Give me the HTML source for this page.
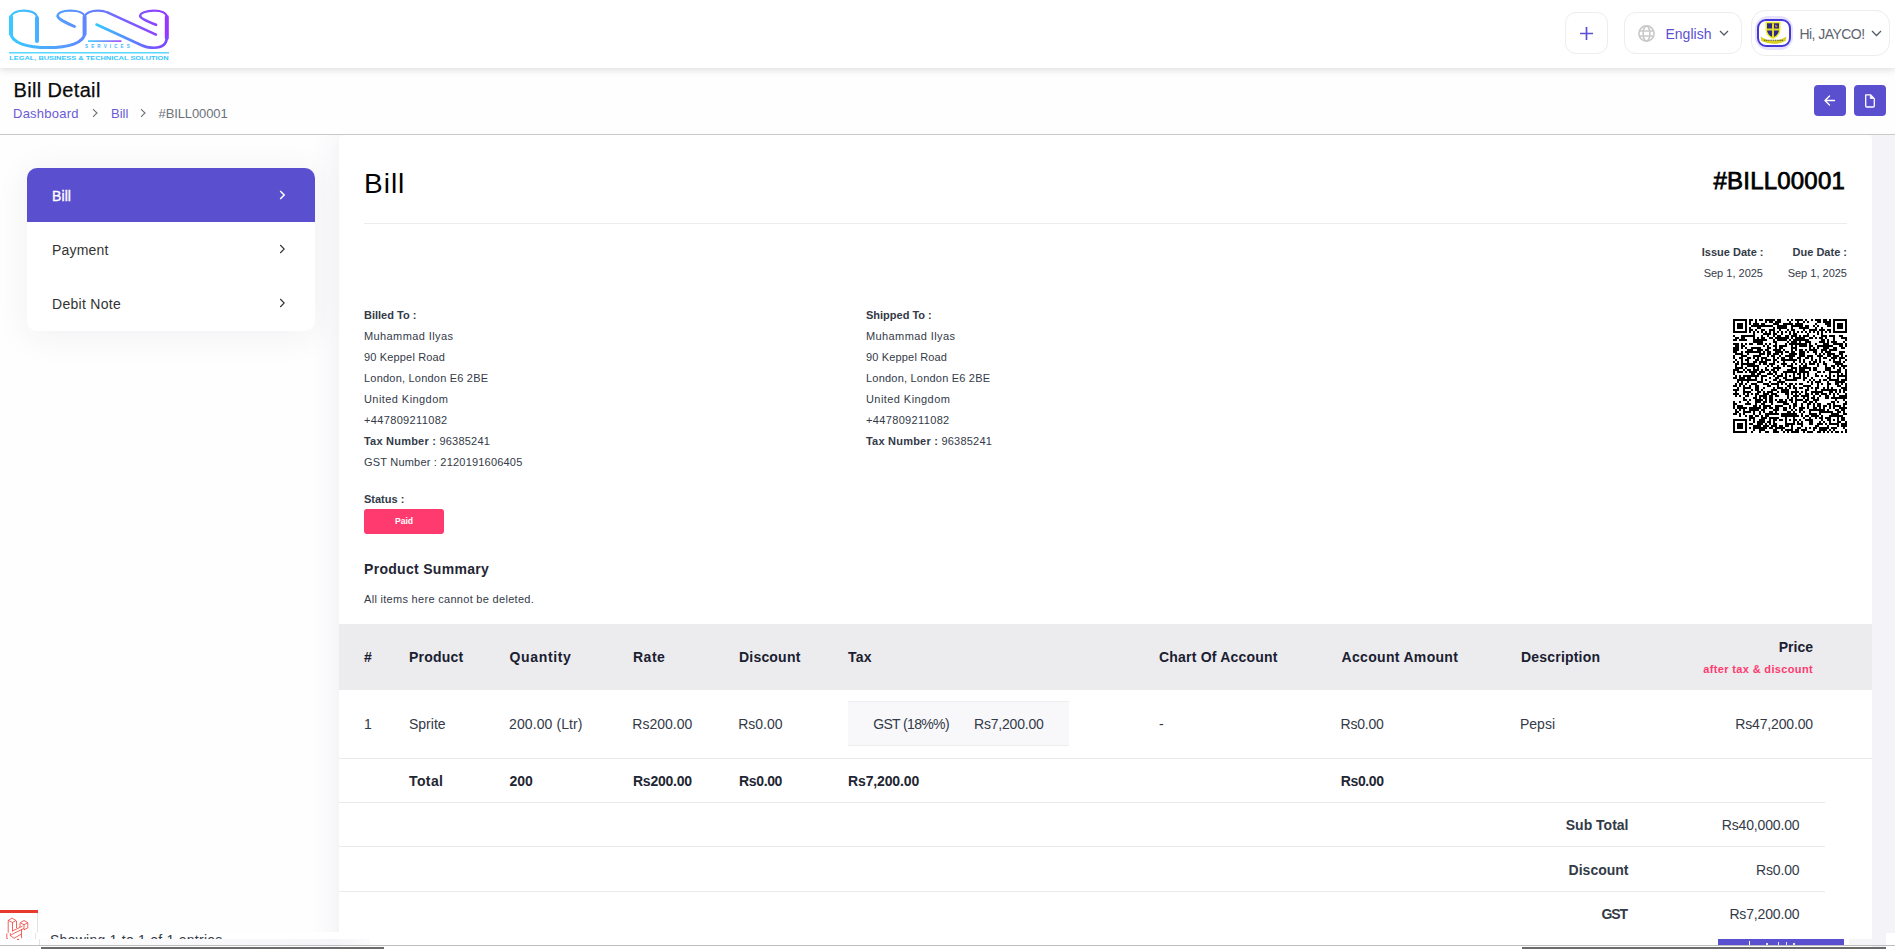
<!DOCTYPE html>
<html><head><meta charset="utf-8"><title>Bill Detail</title>
<style>
*{box-sizing:border-box;margin:0;padding:0}
html,body{width:1895px;height:949px;overflow:hidden;background:#fefefe;font-family:"Liberation Sans",sans-serif}
.t{position:absolute;line-height:1;white-space:nowrap}
.abs{position:absolute}
</style></head><body>
<div class="abs" style="left:0;top:0;width:1895px;height:949px;overflow:hidden">
<!-- main card -->
<div class="abs" style="left:339px;top:135px;width:1533px;height:900px;background:#fff;border-radius:5px 5px 0 0;box-shadow:0 0 32px rgba(50,50,130,0.09)"></div>
<div class="abs" style="left:1872px;top:135px;width:23px;height:814px;background:#f4f4f8"></div>
<!-- page subheader bg -->
<div class="abs" style="left:0;top:68px;width:1895px;height:67px;background:#fefefe;border-bottom:1px solid #c9c9c9"></div>
<!-- header -->
<div class="abs" style="left:0;top:0;width:1895px;height:68px;background:#fff;box-shadow:0 2px 7px rgba(0,0,0,0.13)"></div>
<svg style="position:absolute;left:0;top:0" width="180" height="68" viewBox="0 0 180 68">
<defs>
<linearGradient id="g1" x1="0" y1="0" x2="180" y2="0" gradientUnits="userSpaceOnUse">
<stop offset="0" stop-color="#33d2ff"/><stop offset="0.45" stop-color="#5d8cff"/><stop offset="1" stop-color="#9b2cff"/></linearGradient>
<linearGradient id="g2" x1="95" y1="0" x2="160" y2="0" gradientUnits="userSpaceOnUse">
<stop offset="0" stop-color="#33ccff"/><stop offset="1" stop-color="#7a4bff"/></linearGradient>
<linearGradient id="g3" x1="88" y1="0" x2="122" y2="0" gradientUnits="userSpaceOnUse">
<stop offset="0" stop-color="#33ccff"/><stop offset="1" stop-color="#a040ff"/></linearGradient>
</defs>
<g fill="none" stroke="url(#g1)" stroke-linecap="round">
<path stroke-width="4" d="M37 41V18M11 17V34M84.6 34V17M166.8 38V17"/>
<path stroke-width="2.1" d="M37 18C37 12.5 30 10.6 24 10.6S11 12.5 11 17.5"/>
<path stroke-width="3" d="M11 33C11 43 28 47.6 48 47.6S84.6 43 84.6 33"/>
<path stroke-width="2.1" d="M84.6 17.5C84.6 12.5 78 10.6 70 10.6C62 10.6 57.6 13 57.6 16"/><path stroke-width="2.9" d="M57.8 16.2C58 18.5 62 21 74.5 26.5"/>
<path stroke-width="2.1" d="M84.6 17.5C84.6 12.5 92 10.6 98 10.6C102 10.6 105 11.2 108 12.6"/>
<path stroke-width="2.5" d="M108 12.6L156 34.6"/>
<path stroke-width="2.1" d="M166.8 17.5C166.8 12.5 161 10.6 154 10.6C146 10.6 140 13 140 16"/><path stroke-width="2.7" d="M140.2 16.2C140.5 18.5 146 21 156 24.8"/>
</g>
<path d="M96.5 24.5L141 45C145 47 149.5 47.7 154 47.7C161 47.7 166.8 45 166.8 37" fill="none" stroke="url(#g2)" stroke-width="2.6" stroke-linecap="round"/>
<rect x="88" y="40.3" width="33.5" height="1.6" fill="url(#g3)"/>
<text x="85" y="47.8" font-family="Liberation Sans" font-weight="700" font-size="4.6" letter-spacing="3.1" fill="#3fb8ff">SERVICES</text>
<rect x="9" y="52" width="160" height="1.5" fill="#5ad8ff"/>
<text x="9.2" y="59.6" font-family="Liberation Sans" font-weight="700" font-size="5.6" textLength="159.5" lengthAdjust="spacingAndGlyphs" fill="#33c6ff">LEGAL, BUSINESS &amp; TECHNICAL SOLUTION</text>
</svg>
<div class="abs" style="left:1565px;top:12px;width:43px;height:42px;border:1px solid #ededf0;border-radius:11px;background:#fff"></div>
<svg class="abs" style="left:1579px;top:26px" width="15" height="15" viewBox="0 0 15 15"><path d="M7.5 1V14M1 7.5H14" stroke="#5b4fd3" stroke-width="1.7"/></svg>
<div class="abs" style="left:1624px;top:12px;width:118px;height:42px;border:1px solid #ededf0;border-radius:12px;background:#fff"></div>
<svg class="abs" style="left:1637px;top:24px" width="19" height="19" viewBox="0 0 19 19"><g fill="none" stroke="#c9c9cc" stroke-width="1.6"><circle cx="9.5" cy="9.5" r="7.6"/><ellipse cx="9.5" cy="9.5" rx="3.4" ry="7.6"/><path d="M2 7H17M2 12H17"/></g></svg>
<svg class="abs" style="left:1719px;top:30px" width="10" height="7" viewBox="0 0 10 7"><path d="M1 1L5 5L9 1" fill="none" stroke="#555b66" stroke-width="1.3"/></svg>
<div class="abs" style="left:1751px;top:10px;width:139px;height:46px;border:1px solid #ededf0;border-radius:14px;background:#fff"></div>
<div class="abs" style="left:1755px;top:16px;width:38px;height:34px;border-radius:13px;background:#e6e2fb"></div>
<div class="abs" style="left:1757px;top:19px;width:34px;height:28px;border:2.5px solid #4638d8;border-radius:9px;background:#fff;overflow:hidden">
<svg width="29" height="23" viewBox="0 0 29 23" style="position:absolute;left:0;top:0">
<path d="M6.5 0.8H21.5V8.5C21.5 13.5 17.5 16.8 14 18C10.5 16.8 6.5 13.5 6.5 8.5Z" fill="#f0ea2a"/>
<path d="M8 2.3H20V8.5C20 12.5 17 15.3 14 16.3C11 15.3 8 12.5 8 8.5Z" fill="#2b2a86"/>
<path d="M13 2.3H15V16.3H13ZM8 7.6H20V9.6H8Z" fill="#e6db2c"/>
<path d="M16 3.5L19 5.5L16.5 6.5Z" fill="#e0833a"/>
<path d="M1.5 15.5Q14 24 27.5 15.5L26.5 20Q14 25.5 2.5 20Z" fill="#d8cf22"/>
<path d="M5 19.2H24" stroke="#5a5020" stroke-width="1.1" stroke-dasharray="1.2 0.6"/>
</svg></div>
<svg class="abs" style="left:1871px;top:30px" width="11" height="7" viewBox="0 0 11 7"><path d="M1 1L5.5 5.5L10 1" fill="none" stroke="#555b66" stroke-width="1.3"/></svg>
<svg class="abs" style="left:91px;top:108px" width="8" height="10" viewBox="0 0 8 10"><path d="M2 1.2L6 5L2 8.8" fill="none" stroke="#6c727c" stroke-width="1.1"/></svg>
<svg class="abs" style="left:139px;top:108px" width="8" height="10" viewBox="0 0 8 10"><path d="M2 1.2L6 5L2 8.8" fill="none" stroke="#6c727c" stroke-width="1.1"/></svg>
<!-- action buttons -->
<div class="abs" style="left:1814px;top:85px;width:32px;height:31px;background:#5a4fcf;border-radius:4px"></div>
<svg class="abs" style="left:1814px;top:85px" width="32" height="31" viewBox="0 0 32 31"><path d="M20.5 15.5H11.2M15.5 11L11 15.5L15.5 20" fill="none" stroke="#fff" stroke-width="1.4" stroke-linecap="round" stroke-linejoin="round"/></svg>
<div class="abs" style="left:1854px;top:85px;width:32px;height:31px;background:#5a4fcf;border-radius:4px"></div>
<svg class="abs" style="left:1854px;top:85px" width="32" height="31" viewBox="0 0 32 31"><path d="M11.7 9.8H16.5L20.3 13.6V21C20.3 21.6 19.9 22 19.3 22H12.7C12.1 22 11.7 21.6 11.7 21Z" fill="none" stroke="#fff" stroke-width="1.3" stroke-linejoin="round"/><path d="M16.3 10.2V13.5H19.8" fill="#fff" stroke="#fff" stroke-width="0.8"/></svg>
<!-- nav card -->
<div class="abs" style="left:27px;top:168px;width:288px;height:163px;background:#fff;border-radius:10px;box-shadow:0 4px 36px rgba(40,40,90,0.065);overflow:hidden">
<div class="abs" style="left:0;top:0;width:288px;height:54px;background:#5a4fcf"></div>
</div>
<svg class="abs" style="left:277px;top:189px" width="10" height="12" viewBox="0 0 10 12"><path d="M3.2 2L7.2 6L3.2 10" fill="none" stroke="#fff" stroke-width="1.5"/></svg>
<svg class="abs" style="left:277px;top:243px" width="10" height="12" viewBox="0 0 10 12"><path d="M3.2 2L7.2 6L3.2 10" fill="none" stroke="#333" stroke-width="1.1"/></svg>
<svg class="abs" style="left:277px;top:297px" width="10" height="12" viewBox="0 0 10 12"><path d="M3.2 2L7.2 6L3.2 10" fill="none" stroke="#333" stroke-width="1.1"/></svg>
<!-- content -->
<div class="abs" style="left:364px;top:223px;width:1483px;height:1px;background:#ececef"></div>
<svg class="abs" style="left:1733px;top:319px" width="114" height="114" viewBox="0 0 114 114" shape-rendering="crispEdges"><path d="M0 0h14v2h-14zM16 0h4v2h-4zM22 0h2v2h-2zM26 0h4v2h-4zM32 0h10v2h-10zM44 0h4v2h-4zM54 0h2v2h-2zM58 0h2v2h-2zM62 0h8v2h-8zM72 0h2v2h-2zM78 0h2v2h-2zM82 0h6v2h-6zM90 0h4v2h-4zM96 0h2v2h-2zM100 0h14v2h-14zM0 2h2v2h-2zM12 2h2v2h-2zM16 2h2v2h-2zM22 2h2v2h-2zM32 2h2v2h-2zM36 2h4v2h-4zM42 2h6v2h-6zM56 2h2v2h-2zM64 2h2v2h-2zM70 2h2v2h-2zM74 2h2v2h-2zM84 2h4v2h-4zM90 2h8v2h-8zM100 2h2v2h-2zM112 2h2v2h-2zM0 4h2v2h-2zM4 4h6v2h-6zM12 4h2v2h-2zM16 4h2v2h-2zM20 4h6v2h-6zM28 4h4v2h-4zM40 4h6v2h-6zM50 4h10v2h-10zM62 4h8v2h-8zM82 4h2v2h-2zM92 4h6v2h-6zM100 4h2v2h-2zM104 4h6v2h-6zM112 4h2v2h-2zM0 6h2v2h-2zM4 6h6v2h-6zM12 6h2v2h-2zM18 6h22v2h-22zM44 6h10v2h-10zM58 6h12v2h-12zM72 6h4v2h-4zM80 6h2v2h-2zM84 6h2v2h-2zM94 6h4v2h-4zM100 6h2v2h-2zM104 6h6v2h-6zM112 6h2v2h-2zM0 8h2v2h-2zM4 8h6v2h-6zM12 8h2v2h-2zM16 8h2v2h-2zM24 8h4v2h-4zM40 8h2v2h-2zM44 8h10v2h-10zM58 8h2v2h-2zM66 8h10v2h-10zM82 8h2v2h-2zM88 8h2v2h-2zM100 8h2v2h-2zM104 8h6v2h-6zM112 8h2v2h-2zM0 10h2v2h-2zM12 10h2v2h-2zM16 10h4v2h-4zM22 10h2v2h-2zM28 10h4v2h-4zM36 10h6v2h-6zM46 10h2v2h-2zM54 10h2v2h-2zM58 10h4v2h-4zM70 10h2v2h-2zM76 10h8v2h-8zM86 10h6v2h-6zM94 10h4v2h-4zM100 10h2v2h-2zM112 10h2v2h-2zM0 12h14v2h-14zM16 12h2v2h-2zM20 12h2v2h-2zM24 12h2v2h-2zM28 12h2v2h-2zM32 12h2v2h-2zM36 12h2v2h-2zM40 12h2v2h-2zM44 12h2v2h-2zM48 12h2v2h-2zM52 12h2v2h-2zM56 12h2v2h-2zM60 12h2v2h-2zM64 12h2v2h-2zM68 12h2v2h-2zM72 12h2v2h-2zM76 12h2v2h-2zM80 12h2v2h-2zM84 12h2v2h-2zM88 12h2v2h-2zM92 12h2v2h-2zM96 12h2v2h-2zM100 12h14v2h-14zM20 14h2v2h-2zM30 14h8v2h-8zM40 14h4v2h-4zM48 14h2v2h-2zM56 14h2v2h-2zM60 14h4v2h-4zM74 14h2v2h-2zM84 14h2v2h-2zM88 14h2v2h-2zM0 16h2v2h-2zM8 16h14v2h-14zM28 16h2v2h-2zM34 16h2v2h-2zM40 16h2v2h-2zM44 16h4v2h-4zM52 16h4v2h-4zM58 16h6v2h-6zM66 16h2v2h-2zM70 16h6v2h-6zM80 16h2v2h-2zM88 16h6v2h-6zM96 16h6v2h-6zM106 16h4v2h-4zM2 18h4v2h-4zM8 18h4v2h-4zM20 18h2v2h-2zM24 18h2v2h-2zM28 18h4v2h-4zM36 18h4v2h-4zM42 18h14v2h-14zM58 18h2v2h-2zM62 18h10v2h-10zM76 18h4v2h-4zM82 18h2v2h-2zM86 18h4v2h-4zM92 18h2v2h-2zM100 18h2v2h-2zM108 18h6v2h-6zM0 20h4v2h-4zM6 20h8v2h-8zM20 20h14v2h-14zM40 20h2v2h-2zM44 20h10v2h-10zM56 20h2v2h-2zM60 20h16v2h-16zM88 20h4v2h-4zM94 20h2v2h-2zM100 20h2v2h-2zM112 20h2v2h-2zM20 22h10v2h-10zM40 22h4v2h-4zM54 22h2v2h-2zM58 22h6v2h-6zM66 22h2v2h-2zM72 22h6v2h-6zM86 22h6v2h-6zM94 22h2v2h-2zM98 22h6v2h-6zM110 22h2v2h-2zM0 24h6v2h-6zM8 24h2v2h-2zM12 24h2v2h-2zM16 24h4v2h-4zM24 24h6v2h-6zM32 24h2v2h-2zM36 24h2v2h-2zM42 24h2v2h-2zM52 24h2v2h-2zM56 24h18v2h-18zM76 24h2v2h-2zM82 24h2v2h-2zM90 24h6v2h-6zM100 24h10v2h-10zM112 24h2v2h-2zM2 26h4v2h-4zM8 26h4v2h-4zM30 26h2v2h-2zM34 26h2v2h-2zM40 26h4v2h-4zM46 26h8v2h-8zM58 26h2v2h-2zM62 26h2v2h-2zM66 26h8v2h-8zM76 26h4v2h-4zM84 26h16v2h-16zM106 26h4v2h-4zM112 26h2v2h-2zM0 28h6v2h-6zM8 28h2v2h-2zM12 28h2v2h-2zM18 28h10v2h-10zM34 28h4v2h-4zM42 28h2v2h-2zM46 28h4v2h-4zM58 28h6v2h-6zM76 28h2v2h-2zM80 28h2v2h-2zM84 28h2v2h-2zM90 28h6v2h-6zM100 28h4v2h-4zM108 28h4v2h-4zM0 30h6v2h-6zM14 30h6v2h-6zM24 30h6v2h-6zM32 30h4v2h-4zM40 30h8v2h-8zM50 30h2v2h-2zM58 30h2v2h-2zM62 30h2v2h-2zM66 30h4v2h-4zM72 30h2v2h-2zM76 30h8v2h-8zM88 30h6v2h-6zM96 30h8v2h-8zM0 32h4v2h-4zM8 32h2v2h-2zM12 32h16v2h-16zM30 32h2v2h-2zM34 32h4v2h-4zM42 32h8v2h-8zM52 32h4v2h-4zM58 32h4v2h-4zM66 32h6v2h-6zM74 32h2v2h-2zM80 32h4v2h-4zM88 32h2v2h-2zM92 32h6v2h-6zM106 32h6v2h-6zM2 34h8v2h-8zM14 34h2v2h-2zM26 34h6v2h-6zM34 34h4v2h-4zM40 34h6v2h-6zM48 34h2v2h-2zM56 34h8v2h-8zM66 34h6v2h-6zM82 34h2v2h-2zM86 34h2v2h-2zM90 34h2v2h-2zM94 34h8v2h-8zM106 34h4v2h-4zM0 36h2v2h-2zM8 36h6v2h-6zM20 36h8v2h-8zM34 36h2v2h-2zM38 36h4v2h-4zM46 36h2v2h-2zM52 36h10v2h-10zM66 36h6v2h-6zM74 36h6v2h-6zM84 36h6v2h-6zM94 36h4v2h-4zM100 36h6v2h-6zM108 36h2v2h-2zM112 36h2v2h-2zM0 38h2v2h-2zM6 38h4v2h-4zM14 38h4v2h-4zM20 38h2v2h-2zM24 38h2v2h-2zM28 38h6v2h-6zM40 38h2v2h-2zM44 38h2v2h-2zM48 38h4v2h-4zM56 38h4v2h-4zM64 38h4v2h-4zM72 38h4v2h-4zM78 38h2v2h-2zM86 38h2v2h-2zM90 38h4v2h-4zM98 38h6v2h-6zM106 38h6v2h-6zM2 40h2v2h-2zM8 40h2v2h-2zM12 40h4v2h-4zM22 40h4v2h-4zM28 40h2v2h-2zM32 40h6v2h-6zM40 40h4v2h-4zM48 40h16v2h-16zM66 40h2v2h-2zM70 40h2v2h-2zM78 40h2v2h-2zM82 40h2v2h-2zM86 40h2v2h-2zM96 40h2v2h-2zM100 40h2v2h-2zM106 40h2v2h-2zM112 40h2v2h-2zM0 42h2v2h-2zM4 42h2v2h-2zM8 42h2v2h-2zM14 42h2v2h-2zM20 42h4v2h-4zM26 42h8v2h-8zM40 42h2v2h-2zM44 42h2v2h-2zM50 42h2v2h-2zM60 42h2v2h-2zM66 42h2v2h-2zM70 42h2v2h-2zM76 42h2v2h-2zM80 42h4v2h-4zM86 42h2v2h-2zM90 42h2v2h-2zM100 42h8v2h-8zM110 42h2v2h-2zM2 44h4v2h-4zM8 44h14v2h-14zM26 44h2v2h-2zM30 44h4v2h-4zM36 44h6v2h-6zM48 44h6v2h-6zM58 44h2v2h-2zM62 44h2v2h-2zM68 44h2v2h-2zM72 44h2v2h-2zM76 44h6v2h-6zM84 44h2v2h-2zM90 44h4v2h-4zM102 44h8v2h-8zM2 46h2v2h-2zM8 46h2v2h-2zM14 46h12v2h-12zM34 46h2v2h-2zM38 46h2v2h-2zM44 46h2v2h-2zM50 46h2v2h-2zM54 46h6v2h-6zM66 46h2v2h-2zM70 46h4v2h-4zM84 46h2v2h-2zM92 46h2v2h-2zM98 46h4v2h-4zM104 46h2v2h-2zM108 46h6v2h-6zM2 48h8v2h-8zM12 48h2v2h-2zM20 48h2v2h-2zM24 48h2v2h-2zM32 48h2v2h-2zM40 48h8v2h-8zM58 48h6v2h-6zM66 48h12v2h-12zM80 48h4v2h-4zM92 48h6v2h-6zM100 48h2v2h-2zM106 48h2v2h-2zM110 48h2v2h-2zM0 50h6v2h-6zM10 50h2v2h-2zM14 50h4v2h-4zM20 50h6v2h-6zM28 50h2v2h-2zM32 50h4v2h-4zM38 50h4v2h-4zM44 50h2v2h-2zM54 50h6v2h-6zM62 50h2v2h-2zM66 50h6v2h-6zM76 50h2v2h-2zM80 50h4v2h-4zM92 50h6v2h-6zM104 50h4v2h-4zM112 50h2v2h-2zM0 52h2v2h-2zM4 52h6v2h-6zM12 52h2v2h-2zM16 52h8v2h-8zM26 52h6v2h-6zM36 52h2v2h-2zM40 52h4v2h-4zM50 52h14v2h-14zM66 52h10v2h-10zM84 52h4v2h-4zM90 52h2v2h-2zM96 52h12v2h-12zM112 52h2v2h-2zM0 54h2v2h-2zM18 54h4v2h-4zM24 54h4v2h-4zM34 54h6v2h-6zM42 54h2v2h-2zM48 54h2v2h-2zM52 54h2v2h-2zM60 54h2v2h-2zM64 54h4v2h-4zM70 54h2v2h-2zM74 54h2v2h-2zM82 54h2v2h-2zM96 54h2v2h-2zM104 54h2v2h-2zM108 54h2v2h-2zM112 54h2v2h-2zM2 56h2v2h-2zM6 56h2v2h-2zM10 56h16v2h-16zM28 56h6v2h-6zM40 56h2v2h-2zM44 56h6v2h-6zM52 56h2v2h-2zM56 56h2v2h-2zM60 56h2v2h-2zM66 56h2v2h-2zM70 56h2v2h-2zM74 56h2v2h-2zM82 56h4v2h-4zM88 56h2v2h-2zM92 56h2v2h-2zM96 56h2v2h-2zM100 56h2v2h-2zM104 56h10v2h-10zM0 58h4v2h-4zM6 58h6v2h-6zM14 58h4v2h-4zM22 58h2v2h-2zM28 58h2v2h-2zM36 58h2v2h-2zM42 58h4v2h-4zM50 58h4v2h-4zM60 58h8v2h-8zM70 58h4v2h-4zM78 58h2v2h-2zM94 58h4v2h-4zM104 58h2v2h-2zM112 58h2v2h-2zM4 60h20v2h-20zM28 60h2v2h-2zM32 60h2v2h-2zM40 60h4v2h-4zM46 60h2v2h-2zM52 60h12v2h-12zM70 60h2v2h-2zM76 60h2v2h-2zM80 60h2v2h-2zM86 60h2v2h-2zM90 60h4v2h-4zM96 60h10v2h-10zM108 60h6v2h-6zM4 62h2v2h-2zM8 62h2v2h-2zM14 62h2v2h-2zM24 62h6v2h-6zM36 62h2v2h-2zM44 62h8v2h-8zM74 62h2v2h-2zM78 62h2v2h-2zM82 62h6v2h-6zM94 62h2v2h-2zM102 62h10v2h-10zM2 64h2v2h-2zM6 64h4v2h-4zM12 64h2v2h-2zM18 64h6v2h-6zM30 64h6v2h-6zM38 64h8v2h-8zM48 64h2v2h-2zM52 64h2v2h-2zM56 64h4v2h-4zM62 64h2v2h-2zM66 64h4v2h-4zM78 64h2v2h-2zM84 64h2v2h-2zM88 64h2v2h-2zM94 64h4v2h-4zM102 64h4v2h-4zM108 64h2v2h-2zM112 64h2v2h-2zM0 66h4v2h-4zM6 66h2v2h-2zM10 66h2v2h-2zM16 66h2v2h-2zM22 66h4v2h-4zM34 66h4v2h-4zM44 66h2v2h-2zM54 66h4v2h-4zM60 66h2v2h-2zM70 66h8v2h-8zM84 66h2v2h-2zM94 66h2v2h-2zM104 66h4v2h-4zM112 66h2v2h-2zM4 68h2v2h-2zM10 68h8v2h-8zM22 68h4v2h-4zM30 68h2v2h-2zM40 68h2v2h-2zM44 68h6v2h-6zM52 68h2v2h-2zM56 68h2v2h-2zM60 68h4v2h-4zM66 68h4v2h-4zM74 68h2v2h-2zM78 68h2v2h-2zM82 68h4v2h-4zM90 68h2v2h-2zM94 68h2v2h-2zM98 68h2v2h-2zM108 68h6v2h-6zM0 70h6v2h-6zM10 70h2v2h-2zM18 70h2v2h-2zM22 70h4v2h-4zM28 70h2v2h-2zM38 70h6v2h-6zM48 70h8v2h-8zM62 70h2v2h-2zM72 70h4v2h-4zM82 70h2v2h-2zM88 70h16v2h-16zM106 70h2v2h-2zM110 70h4v2h-4zM2 72h2v2h-2zM10 72h8v2h-8zM24 72h4v2h-4zM30 72h2v2h-2zM34 72h6v2h-6zM44 72h2v2h-2zM48 72h8v2h-8zM58 72h8v2h-8zM68 72h2v2h-2zM72 72h2v2h-2zM78 72h12v2h-12zM96 72h4v2h-4zM102 72h2v2h-2zM106 72h2v2h-2zM110 72h2v2h-2zM0 74h6v2h-6zM10 74h2v2h-2zM14 74h2v2h-2zM18 74h2v2h-2zM22 74h4v2h-4zM30 74h6v2h-6zM38 74h6v2h-6zM52 74h4v2h-4zM58 74h2v2h-2zM62 74h2v2h-2zM66 74h2v2h-2zM72 74h4v2h-4zM78 74h2v2h-2zM82 74h4v2h-4zM88 74h6v2h-6zM96 74h2v2h-2zM100 74h2v2h-2zM104 74h2v2h-2zM112 74h2v2h-2zM2 76h2v2h-2zM6 76h2v2h-2zM12 76h4v2h-4zM22 76h2v2h-2zM26 76h8v2h-8zM36 76h4v2h-4zM42 76h4v2h-4zM54 76h2v2h-2zM60 76h6v2h-6zM68 76h8v2h-8zM80 76h2v2h-2zM86 76h2v2h-2zM92 76h4v2h-4zM100 76h2v2h-2zM106 76h8v2h-8zM10 78h2v2h-2zM20 78h4v2h-4zM26 78h2v2h-2zM30 78h4v2h-4zM36 78h4v2h-4zM54 78h2v2h-2zM58 78h2v2h-2zM62 78h2v2h-2zM70 78h2v2h-2zM74 78h2v2h-2zM78 78h4v2h-4zM84 78h2v2h-2zM92 78h4v2h-4zM98 78h16v2h-16zM10 80h4v2h-4zM16 80h2v2h-2zM22 80h8v2h-8zM32 80h2v2h-2zM36 80h4v2h-4zM42 80h2v2h-2zM46 80h4v2h-4zM52 80h2v2h-2zM56 80h4v2h-4zM62 80h8v2h-8zM72 80h4v2h-4zM80 80h6v2h-6zM102 80h2v2h-2zM110 80h2v2h-2zM0 82h2v2h-2zM6 82h2v2h-2zM14 82h2v2h-2zM22 82h6v2h-6zM30 82h4v2h-4zM36 82h4v2h-4zM44 82h10v2h-10zM58 82h2v2h-2zM62 82h2v2h-2zM70 82h4v2h-4zM76 82h4v2h-4zM82 82h2v2h-2zM98 82h4v2h-4zM104 82h2v2h-2zM112 82h2v2h-2zM0 84h4v2h-4zM12 84h6v2h-6zM22 84h2v2h-2zM28 84h4v2h-4zM38 84h2v2h-2zM50 84h6v2h-6zM60 84h4v2h-4zM68 84h2v2h-2zM74 84h4v2h-4zM80 84h2v2h-2zM84 84h4v2h-4zM94 84h4v2h-4zM100 84h2v2h-2zM110 84h4v2h-4zM0 86h2v2h-2zM4 86h6v2h-6zM20 86h4v2h-4zM26 86h2v2h-2zM30 86h8v2h-8zM42 86h8v2h-8zM56 86h2v2h-2zM60 86h4v2h-4zM68 86h2v2h-2zM74 86h2v2h-2zM80 86h2v2h-2zM84 86h4v2h-4zM90 86h4v2h-4zM96 86h2v2h-2zM100 86h8v2h-8zM110 86h2v2h-2zM0 88h2v2h-2zM4 88h10v2h-10zM16 88h12v2h-12zM30 88h4v2h-4zM36 88h4v2h-4zM42 88h4v2h-4zM50 88h4v2h-4zM56 88h2v2h-2zM60 88h2v2h-2zM66 88h6v2h-6zM74 88h2v2h-2zM80 88h4v2h-4zM86 88h2v2h-2zM90 88h2v2h-2zM96 88h2v2h-2zM100 88h2v2h-2zM106 88h8v2h-8zM2 90h2v2h-2zM6 90h2v2h-2zM10 90h2v2h-2zM16 90h10v2h-10zM28 90h4v2h-4zM40 90h6v2h-6zM50 90h4v2h-4zM58 90h2v2h-2zM62 90h2v2h-2zM66 90h4v2h-4zM76 90h16v2h-16zM94 90h2v2h-2zM102 90h4v2h-4zM108 90h4v2h-4zM2 92h4v2h-4zM10 92h8v2h-8zM20 92h2v2h-2zM26 92h2v2h-2zM30 92h2v2h-2zM36 92h4v2h-4zM42 92h2v2h-2zM54 92h4v2h-4zM60 92h2v2h-2zM66 92h2v2h-2zM70 92h2v2h-2zM76 92h2v2h-2zM86 92h14v2h-14zM104 92h4v2h-4zM110 92h2v2h-2zM0 94h4v2h-4zM6 94h2v2h-2zM10 94h2v2h-2zM20 94h2v2h-2zM26 94h2v2h-2zM32 94h14v2h-14zM48 94h16v2h-16zM68 94h2v2h-2zM76 94h8v2h-8zM86 94h2v2h-2zM98 94h8v2h-8zM110 94h4v2h-4zM6 96h2v2h-2zM12 96h2v2h-2zM16 96h4v2h-4zM22 96h4v2h-4zM28 96h2v2h-2zM32 96h4v2h-4zM48 96h18v2h-18zM68 96h2v2h-2zM72 96h4v2h-4zM78 96h8v2h-8zM88 96h2v2h-2zM96 96h14v2h-14zM16 98h6v2h-6zM28 98h6v2h-6zM36 98h10v2h-10zM52 98h2v2h-2zM60 98h2v2h-2zM70 98h2v2h-2zM76 98h2v2h-2zM82 98h2v2h-2zM86 98h4v2h-4zM92 98h6v2h-6zM104 98h2v2h-2zM108 98h4v2h-4zM0 100h14v2h-14zM16 100h2v2h-2zM20 100h2v2h-2zM26 100h6v2h-6zM36 100h2v2h-2zM40 100h4v2h-4zM46 100h4v2h-4zM52 100h2v2h-2zM56 100h2v2h-2zM60 100h4v2h-4zM66 100h2v2h-2zM72 100h8v2h-8zM88 100h2v2h-2zM94 100h4v2h-4zM100 100h2v2h-2zM104 100h2v2h-2zM108 100h4v2h-4zM0 102h2v2h-2zM12 102h2v2h-2zM20 102h2v2h-2zM24 102h8v2h-8zM34 102h4v2h-4zM40 102h2v2h-2zM52 102h2v2h-2zM60 102h2v2h-2zM64 102h2v2h-2zM68 102h2v2h-2zM76 102h4v2h-4zM86 102h2v2h-2zM90 102h2v2h-2zM96 102h2v2h-2zM104 102h4v2h-4zM112 102h2v2h-2zM0 104h2v2h-2zM4 104h6v2h-6zM12 104h2v2h-2zM16 104h4v2h-4zM24 104h6v2h-6zM32 104h2v2h-2zM36 104h2v2h-2zM40 104h4v2h-4zM52 104h10v2h-10zM64 104h6v2h-6zM76 104h4v2h-4zM84 104h6v2h-6zM92 104h2v2h-2zM96 104h10v2h-10zM108 104h6v2h-6zM0 106h2v2h-2zM4 106h6v2h-6zM12 106h2v2h-2zM20 106h8v2h-8zM30 106h6v2h-6zM38 106h6v2h-6zM46 106h4v2h-4zM52 106h4v2h-4zM58 106h2v2h-2zM68 106h2v2h-2zM82 106h4v2h-4zM94 106h2v2h-2zM104 106h2v2h-2zM108 106h6v2h-6zM0 108h2v2h-2zM4 108h6v2h-6zM12 108h2v2h-2zM16 108h2v2h-2zM20 108h14v2h-14zM36 108h4v2h-4zM42 108h10v2h-10zM58 108h2v2h-2zM64 108h4v2h-4zM72 108h2v2h-2zM76 108h2v2h-2zM80 108h4v2h-4zM86 108h10v2h-10zM98 108h6v2h-6zM110 108h2v2h-2zM0 110h2v2h-2zM12 110h2v2h-2zM20 110h2v2h-2zM26 110h6v2h-6zM40 110h4v2h-4zM48 110h2v2h-2zM52 110h8v2h-8zM62 110h4v2h-4zM68 110h6v2h-6zM80 110h2v2h-2zM86 110h8v2h-8zM96 110h2v2h-2zM100 110h2v2h-2zM112 110h2v2h-2zM0 112h14v2h-14zM18 112h2v2h-2zM26 112h2v2h-2zM32 112h4v2h-4zM40 112h6v2h-6zM50 112h2v2h-2zM54 112h2v2h-2zM58 112h8v2h-8zM70 112h2v2h-2zM74 112h6v2h-6zM84 112h4v2h-4zM90 112h2v2h-2zM94 112h2v2h-2zM98 112h2v2h-2zM102 112h4v2h-4zM108 112h2v2h-2zM112 112h2v2h-2z" fill="#000"/></svg>
<div class="abs" style="left:364px;top:509px;width:80px;height:25px;background:#ff3a6e;border-radius:3px"></div>
<div class="t" style="left:364px;top:517px;width:80px;text-align:center;font-size:8.6px;font-weight:700;color:#fff">Paid</div>
<!-- table -->
<div class="abs" style="left:339px;top:624px;width:1533px;height:66px;background:#ececef"></div>
<div class="abs" style="left:848px;top:701px;width:221px;height:45px;background:#f8f8fb;border-top:1px solid #eeeef1;border-bottom:1px solid #eeeef1"></div>
<div class="abs" style="left:339px;top:758px;width:1533px;height:1px;background:#eaeaed"></div>
<div class="abs" style="left:339px;top:802px;width:1486px;height:1px;background:#eaeaed"></div>
<div class="abs" style="left:339px;top:846px;width:1486px;height:1px;background:#eaeaed"></div>
<div class="abs" style="left:339px;top:891px;width:1486px;height:1px;background:#eaeaed"></div>
<div class="t" style="top:27px;font-size:14px;font-weight:400;color:#5b4fd3;left:1665.5px;">English</div>
<div class="t" style="top:27px;font-size:14px;font-weight:400;color:#5d6470;letter-spacing:-0.55px;left:1799.5px;">Hi, JAYCO!</div>
<div class="t" style="top:80px;font-size:20px;font-weight:400;color:#0b0b0b;letter-spacing:0.35px;left:13.5px;-webkit-text-stroke:0.25px #0b0b0b;">Bill Detail</div>
<div class="t" style="top:107px;font-size:13px;font-weight:400;color:#6a5bd6;letter-spacing:0.25px;left:13px;">Dashboard</div>
<div class="t" style="top:107px;font-size:13px;font-weight:400;color:#6a5bd6;left:111px;">Bill</div>
<div class="t" style="top:107px;font-size:13px;font-weight:400;color:#6c727c;letter-spacing:-0.1px;left:158.5px;">#BILL00001</div>
<div class="t" style="top:189px;font-size:14px;font-weight:400;color:#ffffff;letter-spacing:0.1px;left:52px;-webkit-text-stroke:0.35px #fff;">Bill</div>
<div class="t" style="top:243px;font-size:14px;font-weight:400;color:#333333;letter-spacing:0.2px;left:52px;">Payment</div>
<div class="t" style="top:297px;font-size:14px;font-weight:400;color:#333333;letter-spacing:0.3px;left:52px;">Debit Note</div>
<div class="t" style="top:170px;font-size:28px;font-weight:400;color:#000000;letter-spacing:1px;left:364px;">Bill</div>
<div class="t" style="top:169px;font-size:24px;font-weight:400;color:#000000;letter-spacing:0.2px;right:50px;-webkit-text-stroke:0.75px #000;">#BILL00001</div>
<div class="t" style="top:247px;font-size:11px;font-weight:700;color:#333a48;right:131.5px;">Issue Date :</div>
<div class="t" style="top:268px;font-size:11px;font-weight:400;color:#333a48;right:132px;">Sep 1, 2025</div>
<div class="t" style="top:247px;font-size:11px;font-weight:700;color:#333a48;right:48px;">Due Date :</div>
<div class="t" style="top:268px;font-size:11px;font-weight:400;color:#333a48;right:48px;">Sep 1, 2025</div>
<div class="t" style="top:310px;font-size:11px;font-weight:700;color:#333a48;left:364px;">Billed To :</div>
<div class="t" style="top:310px;font-size:11px;font-weight:700;color:#333a48;left:866px;">Shipped To :</div>
<div class="t" style="top:331px;font-size:11px;font-weight:400;color:#333a48;letter-spacing:0.4px;left:364px;">Muhammad Ilyas</div>
<div class="t" style="top:331px;font-size:11px;font-weight:400;color:#333a48;letter-spacing:0.4px;left:866px;">Muhammad Ilyas</div>
<div class="t" style="top:352px;font-size:11px;font-weight:400;color:#333a48;letter-spacing:0.16px;left:364px;">90 Keppel Road</div>
<div class="t" style="top:352px;font-size:11px;font-weight:400;color:#333a48;letter-spacing:0.16px;left:866px;">90 Keppel Road</div>
<div class="t" style="top:373px;font-size:11px;font-weight:400;color:#333a48;letter-spacing:0.21px;left:364px;">London, London E6 2BE</div>
<div class="t" style="top:373px;font-size:11px;font-weight:400;color:#333a48;letter-spacing:0.21px;left:866px;">London, London E6 2BE</div>
<div class="t" style="top:394px;font-size:11px;font-weight:400;color:#333a48;letter-spacing:0.43px;left:364px;">United Kingdom</div>
<div class="t" style="top:394px;font-size:11px;font-weight:400;color:#333a48;letter-spacing:0.43px;left:866px;">United Kingdom</div>
<div class="t" style="top:415px;font-size:11px;font-weight:400;color:#333a48;letter-spacing:0.35px;left:364px;">+447809211082</div>
<div class="t" style="top:415px;font-size:11px;font-weight:400;color:#333a48;letter-spacing:0.35px;left:866px;">+447809211082</div>
<div class="t" style="left:364px;top:436px;font-size:11px;color:#333a48;letter-spacing:0.22px"><b>Tax Number :</b> 96385241</div>
<div class="t" style="left:866px;top:436px;font-size:11px;color:#333a48;letter-spacing:0.22px"><b>Tax Number :</b> 96385241</div>
<div class="t" style="top:457px;font-size:11px;font-weight:400;color:#333a48;letter-spacing:0.2px;left:364px;">GST Number : 2120191606405</div>
<div class="t" style="top:494px;font-size:11px;font-weight:700;color:#333a48;left:364px;">Status :</div>
<div class="t" style="top:562px;font-size:14px;font-weight:700;color:#1f2633;letter-spacing:0.3px;left:364px;">Product Summary</div>
<div class="t" style="top:594px;font-size:11px;font-weight:400;color:#333a48;letter-spacing:0.3px;left:364px;">All items here cannot be deleted.</div>
<div class="t" style="top:650px;font-size:14px;font-weight:700;color:#1a2030;letter-spacing:0.2px;left:364px;">#</div>
<div class="t" style="top:650px;font-size:14px;font-weight:700;color:#1a2030;letter-spacing:0.2px;left:409px;">Product</div>
<div class="t" style="top:650px;font-size:14px;font-weight:700;color:#1a2030;letter-spacing:0.65px;left:509.5px;">Quantity</div>
<div class="t" style="top:650px;font-size:14px;font-weight:700;color:#1a2030;letter-spacing:0.5px;left:633px;">Rate</div>
<div class="t" style="top:650px;font-size:14px;font-weight:700;color:#1a2030;letter-spacing:0.2px;left:739px;">Discount</div>
<div class="t" style="top:650px;font-size:14px;font-weight:700;color:#1a2030;letter-spacing:0.2px;left:848px;">Tax</div>
<div class="t" style="top:650px;font-size:14px;font-weight:700;color:#1a2030;letter-spacing:0.2px;left:1159px;">Chart Of Account</div>
<div class="t" style="top:650px;font-size:14px;font-weight:700;color:#1a2030;letter-spacing:0.32px;left:1341.5px;">Account Amount</div>
<div class="t" style="top:650px;font-size:14px;font-weight:700;color:#1a2030;letter-spacing:0.2px;left:1521px;">Description</div>
<div class="t" style="top:640px;font-size:14px;font-weight:700;color:#1a2030;right:82px;">Price</div>
<div class="t" style="top:664px;font-size:11px;font-weight:700;color:#ff3a6e;letter-spacing:0.35px;right:82px;">after tax &amp; discount</div>
<div class="t" style="top:717px;font-size:14px;font-weight:400;color:#333a48;left:364px;">1</div>
<div class="t" style="top:717px;font-size:14px;font-weight:400;color:#333a48;left:409px;">Sprite</div>
<div class="t" style="top:717px;font-size:14px;font-weight:400;color:#333a48;letter-spacing:0.1px;left:509px;">200.00 (Ltr)</div>
<div class="t" style="top:717px;font-size:14px;font-weight:400;color:#333a48;left:632.3px;">Rs200.00</div>
<div class="t" style="top:717px;font-size:14px;font-weight:400;color:#333a48;left:738.2px;">Rs0.00</div>
<div class="t" style="top:717px;font-size:14px;font-weight:400;color:#333a48;left:1159px;">-</div>
<div class="t" style="top:717px;font-size:14px;font-weight:400;color:#333a48;letter-spacing:-0.2px;left:1340.5px;">Rs0.00</div>
<div class="t" style="top:717px;font-size:14px;font-weight:400;color:#333a48;left:1520px;">Pepsi</div>
<div class="t" style="top:717px;font-size:14px;font-weight:400;color:#333a48;letter-spacing:-0.65px;left:873.2px;">GST (18%%)</div>
<div class="t" style="top:717px;font-size:14px;font-weight:400;color:#333a48;letter-spacing:-0.2px;left:974px;">Rs7,200.00</div>
<div class="t" style="top:717px;font-size:14px;font-weight:400;color:#333a48;letter-spacing:-0.15px;right:82px;">Rs47,200.00</div>
<div class="t" style="top:774px;font-size:14px;font-weight:700;color:#1f2633;letter-spacing:0.4px;left:409px;">Total</div>
<div class="t" style="top:774px;font-size:14px;font-weight:700;color:#1f2633;left:509.5px;">200</div>
<div class="t" style="top:774px;font-size:14px;font-weight:700;color:#1f2633;letter-spacing:-0.25px;left:633px;">Rs200.00</div>
<div class="t" style="top:774px;font-size:14px;font-weight:700;color:#1f2633;letter-spacing:-0.35px;left:739px;">Rs0.00</div>
<div class="t" style="top:774px;font-size:14px;font-weight:700;color:#1f2633;letter-spacing:-0.13px;left:848px;">Rs7,200.00</div>
<div class="t" style="top:774px;font-size:14px;font-weight:700;color:#1f2633;letter-spacing:-0.35px;left:1340.7px;">Rs0.00</div>
<div class="t" style="top:818px;font-size:14px;font-weight:700;color:#333a48;right:266.5px;">Sub Total</div>
<div class="t" style="top:818px;font-size:14px;font-weight:400;color:#333a48;letter-spacing:-0.15px;right:95.5px;">Rs40,000.00</div>
<div class="t" style="top:863px;font-size:14px;font-weight:700;color:#333a48;right:266.5px;">Discount</div>
<div class="t" style="top:863px;font-size:14px;font-weight:400;color:#333a48;letter-spacing:-0.15px;right:95.5px;">Rs0.00</div>
<div class="t" style="top:907px;font-size:14px;font-weight:700;color:#333a48;letter-spacing:-1.1px;right:268px;">GST</div>
<div class="t" style="top:907px;font-size:14px;font-weight:400;color:#333a48;letter-spacing:-0.15px;right:95.5px;">Rs7,200.00</div>
<!-- bottom glitch -->
<div class="abs" style="left:1718px;top:939px;width:126px;height:6px;background:#5a4fcf"></div>
<div class="abs" style="left:1749px;top:941px;width:1px;height:4px;background:#fff"></div>
<div class="abs" style="left:1766px;top:943px;width:2px;height:2px;background:#e8e6fa"></div>
<div class="abs" style="left:1778px;top:942px;width:1px;height:3px;background:#e8e6fa"></div>
<div class="abs" style="left:1786px;top:942px;width:1px;height:3px;background:#e8e6fa"></div>
<div class="abs" style="left:1793px;top:943px;width:2px;height:2px;background:#e8e6fa"></div>
<div class="abs" style="left:1849px;top:939px;width:24px;height:6px;background:#f5f5f7"></div>
<div class="abs" style="left:1886px;top:933px;width:9px;height:16px;background:#fff"></div>
<div class="abs" style="left:0;top:913px;width:38px;height:32px;background:#fff"></div>
<div class="abs" style="left:0;top:910px;width:38px;height:3px;background:#e8392f"></div>
<svg class="abs" style="left:0;top:905px" width="42" height="42" viewBox="0 0 42 42"><g fill="none" stroke="#f2473d" stroke-width="0.85" stroke-linejoin="round"><path d="M8.2 15.5L12 13L16 15.5L12.5 17.5Z M8.2 15.5V27.8 M12.5 17.5V26.5 M16.5 15.8V23"/><path d="M20.3 17.7L24 15.5L27.8 17.7L24 19.8Z M27.8 17.7V22.8L24 24.8 M24 19.8V24.8 M20 17.9V22"/><path d="M12.8 25.8L22.5 21.2 M14.5 28L23.8 23.5 M10.3 30.5L14.5 28 M10.3 30.5L14 33.3L21.5 29V24 M10.3 28.2V30.5 M6.8 28.5V33.5H7.8 M21.5 29V33.2"/></g><ellipse cx="18" cy="34.3" rx="1.2" ry="0.6" fill="#f2473d"/><path d="M37.5 8V27.5M35.6 28V34M39.5 34.5V40" stroke="#dcdcdc" stroke-width="0.8"/></svg>
<div class="abs" style="left:38px;top:932px;width:301px;height:7px;overflow:hidden;background:#fff"><div class="t" style="left:12px;top:1px;font-size:14px;color:#333a48;letter-spacing:0.25px">Showing 1 to 1 of 1 entries</div></div>
<div class="abs" style="left:40px;top:939px;width:330px;height:6px;background:linear-gradient(90deg,#fdfdfe,#f5f5f9 90%,#fbfbfc)"></div>
<div class="abs" style="left:0;top:945px;width:1895px;height:1px;background:#bdbdc0"></div>
<div class="abs" style="left:41px;top:947px;width:343px;height:2px;background:#6b6b6b"></div>
<div class="abs" style="left:1522px;top:947px;width:364px;height:2px;background:#6b6b6b"></div>
</div>
</body></html>
